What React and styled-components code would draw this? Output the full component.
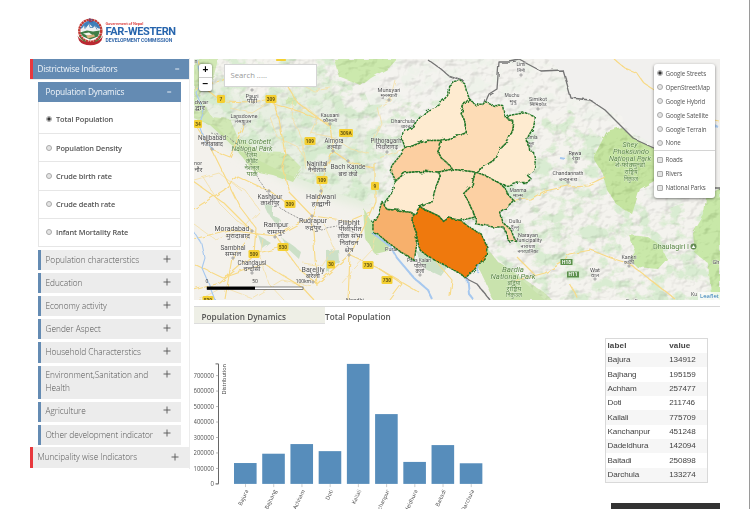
import React from "react";
import styled, { createGlobalStyle } from "styled-components";

const Global = createGlobalStyle`
  * { box-sizing: border-box; }
  html, body { margin: 0; padding: 0; background: #fff; overflow: hidden; }
  body { font-family: "Open Sans", "Noto Sans", sans-serif; color: #555; }
`;

const Page = styled.div`
  width: 750px;
  height: 509px;
  overflow: hidden;
  border-right: 1px solid #9a9a9a;
  display: grid;
  grid-template: 58px 451px / 190px 530px;
`;
const Header = styled.header`
  grid-column: 1 / -1;
  display: flex;
  align-items: flex-start;
  padding: 18px 0 0 75.5px;
`;
const Brand = styled.div`
  display: flex;
  flex-direction: column;
  padding: 4px 0 0 1px;
  white-space: nowrap;
`;
const BrandTop = styled.span`
  font: 700 3.7px/4px "Open Sans", sans-serif;
  letter-spacing: -0.1px;
  color: #dd4545;
`;
const BrandName = styled.span`
  font: 700 11px/11px Roboto, sans-serif;
  letter-spacing: -0.36px;
  color: #2765ad;
`;
const BrandSub = styled.span`
  font: 700 5px/7px Roboto, sans-serif;
  letter-spacing: -0.05px;
  color: #3569aa;
`;

const Sidebar = styled.aside`
  padding: 0.5px 0 0 30px;
  border-right: 1px solid #ececec;
  height: 411px;
`;
const MainItem = styled.div`
  display: flex;
  justify-content: space-between;
  height: 20.5px;
  padding: 0 ${(p) => (p.$open ? 8.5 : 10)}px 0 4.5px;
  border-left: 3px solid #e8383d;
  background: ${(p) => (p.$open ? "#648bb3" : "#ececec")};
  color: ${(p) => (p.$open ? "#f2f6fa" : "#555")};
  font-size: 8.2px;
  line-height: 20.5px;
  font-weight: ${(p) => (p.$open ? 400 : 300)};
  letter-spacing: ${(p) => (p.$open ? -0.18 : 0.04)}px;
  white-space: nowrap;
`;
const SubList = styled.div`
  display: flex;
  flex-direction: column;
  gap: 3px;
  padding: 2.3px 8px 2.5px 7.5px;
  border-top: 1px solid #eee;
`;
const SubHead = styled.div`
  display: flex;
  justify-content: space-between;
  height: 20px;
  padding: 0 8.5px 0 8px;
  background: #648bb3;
  color: #f2f6fa;
  font-size: 8.3px;
  line-height: 20.5px;
  letter-spacing: -0.16px;
`;
const RadioList = styled.div`
  border: solid #e6e6e6;
  border-width: 0 1px 1px;
`;
const RadioRow = styled.label`
  display: flex;
  align-items: center;
  gap: 4px;
  height: ${(p) => (p.$first ? 31 : 28.2)}px;
  padding: ${(p) => (p.$first ? 3 : 0)}px 0 0 7.5px;
  border-top: ${(p) => (p.$first ? 0 : 1)}px solid #e6e6e6;
  font-size: 7.4px;
  font-weight: 600;
  letter-spacing: -0.1px;
`;
const Dot = styled.i`
  flex: none;
  width: 6px;
  height: 6px;
  border: 1px solid #aaa;
  border-radius: ${(p) => (p.$square ? 1 : 4)}px;
  background: ${(p) => (p.$on ? "radial-gradient(#333 0 1.3px, #ddd 2px)" : "#e4e4e4")};
`;
const SubItem = styled.div`
  display: flex;
  justify-content: space-between;
  height: ${(p) => (p.$tall ? 33 : 20.1)}px;
  padding: 3.9px 10.5px 0 5px;
  border-left: 3px solid #648bb3;
  background: #ececec;
  color: #555;
  font-size: 8.3px;
  font-weight: 300;
  line-height: 12.2px;
  letter-spacing: -0.02px;
  white-space: pre-line;
`;
const Sign = styled.svg`
  width: 8px;
  height: 8px;
  flex: none;
  margin-top: ${(p) => p.$top || 0}px;
  stroke: currentColor;
  fill: none;
  stroke-width: 0.9;
`;
const Plus = ({ top }) => <Sign $top={top} viewBox="0 0 8 8"><path d="M.5 4h7M4 .5v7" /></Sign>;
const Minus = ({ top }) => <Sign $top={top} viewBox="0 0 8 8"><path d="M2.2 4h4" /></Sign>;

const Main = styled.main`
  padding: 1px 0 0 4px;
`;
const MapFrame = styled.section`
  position: relative;
  width: 526px;
  height: 241px;
  overflow: hidden;
  background: #f1efea;
`;
const MapDrawing = styled.svg`
  display: block;
  width: 526px;
  height: 241px;
`;
const ZoomBox = styled.div`
  position: absolute;
  left: 5px;
  top: 5px;
  width: 13px;
  height: 27px;
  border-radius: 2px;
  background: #fff;
  box-shadow: 0 0.5px 2px rgba(0, 0, 0, 0.6);
  display: grid;
  grid-template-rows: 1fr 1fr;
`;
const ZoomButton = styled.button`
  border: 0;
  border-bottom: ${(p) => (p.$line ? 1 : 0)}px solid #ccc;
  padding: 0;
  background: none;
  color: #000;
  font: 700 10px/12px "Liberation Sans", sans-serif;
`;
const Search = styled.div`
  position: absolute;
  left: 29.5px;
  top: 5px;
  width: 93px;
  height: 22.5px;
  border: 1px solid #d5d5d5;
  background: #fff;
  padding-left: 6px;
  color: #999;
  font-size: 7.7px;
  line-height: 21.5px;
`;
const Layers = styled.div`
  position: absolute;
  left: 460px;
  top: 5px;
  width: 61px;
  height: 134px;
  padding: 2.5px 0 0 3px;
  border-radius: 3px;
  background: #fff;
  box-shadow: 0 1px 3px rgba(0, 0, 0, 0.5);
`;
const LayerRow = styled.label`
  display: flex;
  align-items: center;
  gap: 2.5px;
  height: 13.9px;
  white-space: nowrap;
  font-size: 6.2px;
  color: #555;
  letter-spacing: -0.12px;
`;
const LayerLine = styled.div`
  height: 1px;
  margin: 0 0 2px -3px;
  background: #d4d4d4;
`;
const Credit = styled.div`
  position: absolute;
  right: 0;
  bottom: 0;
  padding: 0 1px 0 2px;
  background: rgba(255, 255, 255, 0.75);
  color: #2778b5;
  font: 6px/8px "Open Sans", sans-serif;
`;

const Tabs = styled.nav`
  display: flex;
  margin-top: 6px;
  height: 18px;
  border-top: 1px solid #d8d8d8;
  font-size: 8.2px;
  line-height: 19px;
  font-weight: 600;
  letter-spacing: 0.04px;
`;
const Tab = styled.div`
  width: 131px;
  padding-left: ${(p) => (p.$shaded ? 7.5 : 0)}px;
  background: ${(p) => (p.$shaded ? "#eeefe6" : "transparent")};
  border-bottom: ${(p) => (p.$shaded ? 1 : 0)}px solid #ddd;
  white-space: nowrap;
`;
const Results = styled.section`
  display: grid;
  grid-template-columns: 411px 103px;
  height: 179px;
`;
const Chart = styled.svg`
  display: block;
  width: 411px;
  height: 185px;
  font-family: "Open Sans", sans-serif;
`;
const Table = styled.div`
  margin-top: 13.5px;
  height: 145px;
  border: 1px solid #d9d9d9;
  font: 8.1px/14.35px "Liberation Sans", sans-serif;
  color: #444;
`;
const TableRow = styled.div`
  display: grid;
  grid-template-columns: 61.7px 1fr;
  padding-left: 1.5px;
  height: 14.35px;
  padding-top: 0.5px;
  letter-spacing: ${(p) => (p.$head ? 0.12 : -0.1)}px;
  font-weight: ${(p) => (p.$head ? 700 : 400)};
  background: ${(p) => (p.$striped ? "#f6f6f6" : "#fff")};
`;
const Footer = styled.footer`
  margin-left: 417px;
  width: 109px;
  height: 6px;
  background: #333;
`;

const data = [
  ["Bajura", 134912], ["Bajhang", 195159], ["Achham", 257477], ["Doti", 211746], ["Kailali", 775709],
  ["Kanchanpur", 451248], ["Dadeldhura", 142094], ["Baitadi", 250898], ["Darchula", 133274],
];

const districts = [
  ["#feebd0", "265,90 280,78 300,75 313,85 318,105 327,130 310,150 303,175 318,205 318,232 290,243 240,255 200,255 165,268 135,280 125,250 128,232 155,215 180,185 200,165 235,150 262,120"],
  ["#fddcb6", "327,130 345,148 370,150 378,142 400,150 430,153 435,185 458,195 455,220 440,255 420,275 400,315 370,335 345,350 275,342 268,330 240,305 232,290 243,262 240,255 290,243 318,232 318,205 303,175 310,150"],
  ["#fccfa1", "135,280 165,268 200,255 240,255 243,262 232,290 240,305 268,330 275,342 235,350 190,348 135,352 105,378 90,345 95,330 120,300"],
  ["#feebd0", "445,181 458,178 495,172 525,185 520,215 500,250 505,282 520,292 525,325 520,345 502,360 512,370 500,382 470,380 440,390 420,385 380,362 345,350 370,335 400,315 420,275 440,255 455,220 458,195 440,190"],
  ["#feebd0", "105,378 135,352 190,348 235,350 240,362 225,400 215,440 178,455 170,480 150,468 80,462 70,455 75,438 100,405"],
  ["#fde0bf", "235,350 275,342 345,350 335,390 310,415 325,440 345,485 300,495 265,488 250,498 235,482 178,455 215,440 225,400 240,362"],
  ["#fcd0a3", "345,350 380,362 420,385 435,400 445,420 460,435 440,455 418,470 425,500 450,520 465,555 445,557 430,515 400,515 345,505 345,485 325,440 310,415 335,390"],
  ["#f7b06c", "65,438 75,455 80,462 150,468 160,480 158,510 168,535 168,575 162,615 140,600 125,592 95,570 75,555 55,538 38,532 38,500 55,472"],
  ["#ef7908", "178,455 235,482 250,498 265,488 300,495 335,520 362,535 370,550 380,575 378,600 350,635 315,668 300,655 270,638 240,622 205,605 180,585 175,570 168,535 158,510 160,480"],
];

/* label, centre x, baseline y, rendered width, size */
const places = [
  ["n", 196, 63, 3, 5.2], ["Pauri", 252, 98, 13, 5.3], ["पौड़ी", 252, 103, 10, 5], ["dwar", 201.5, 104, 14, 5.6], ["द्वार", 200, 110, 10, 5],
  ["Lansdowne", 244, 117.5, 27, 4.8], ["लैंसडाउन", 243, 123, 17, 4.8],
  ["Najibabad", 212, 140, 28, 6], ["नजीबाबाद", 212, 146, 22, 5.5], ["Kausani", 330, 117, 19, 4.8], ["कौसानी", 330, 122, 14, 4.8],
  ["Almora", 334, 143, 19, 6], ["अल्मोड़ा", 334, 149, 15, 5.2], ["Nainital", 317, 166, 21, 6], ["नैनीताल", 317, 172, 18, 5.6],
  ["Bach Kande", 348, 169, 35, 6], ["बच कंडे", 348, 176, 19, 5.5], ["nor", 198, 165, 8, 5.5], ["नौर", 198.5, 171.5, 8, 5.3],
  ["Kashipur", 270, 199, 25, 5.8], ["काशीपुर", 270, 205, 19, 5.5], ["Haldwani", 321, 199, 30, 6], ["हल्द्वानी", 321, 206, 19, 5.5],
  ["Rudrapur", 313, 223, 28, 5.9], ["रुद्रपुर", 313, 230, 16, 5.4], ["Rampur", 276, 227, 25, 6], ["रामपुर", 276, 234, 18, 5.5],
  ["Moradabad", 232, 231, 35, 6], ["मुरादाबाद", 238, 238, 24, 5.6], ["Sambhal", 233, 249.5, 25, 5.8], ["सम्भल", 233, 256, 16, 5.3],
  ["Chandausi", 252, 264.5, 29, 5.8], ["चन्दौसी", 252, 271, 17, 5.3], ["Bareilly", 313, 272, 23, 6], ["बरेली", 313, 278, 14, 5.4],
  ["Pilibhit", 349, 225, 22, 6], ["पीलीभीत", 350, 231, 23, 5.5], ["लोक सभा", 350, 238, 25, 5.5], ["निर्वाचन", 349, 245, 19, 5.5], ["क्षेत्र", 349, 252, 9, 5.5],
  ["Munsyari", 389, 91.5, 23, 4.9], ["मुनस्यारी", 389, 96.5, 17, 4.8], ["Dharchula", 403, 123, 24, 4.9], ["धारचूला", 408, 128, 14, 4.7],
  ["Pithoragarh", 386, 143, 31, 5.8], ["पिथौरागढ़", 387, 149, 22, 5.3], ["Puranpur", 396, 251, 22, 4.8], ["Palia Kalan", 419, 262, 24, 4.8], ["पलिया", 420, 267.5, 12, 5], ["कलां", 420, 273, 9, 5],
  ["Nandhi", 355, 302, 18, 5.5],
  ["Limi", 521, 66, 9, 4.7], ["लिमी", 521, 71.5, 8, 4.5], ["Muchu", 512, 97, 15, 4.8], ["मुचु", 513, 103, 7, 4.8],
  ["Simikot", 538, 101, 18, 4.7], ["सिमिकोट", 538, 106, 17, 4.8], ["Jumla", 531, 139, 13, 4.8], ["जुम्ला", 530, 145, 9, 4.8],
  ["Rewa", 575, 154.5, 13, 4.8], ["रेवा", 576, 159.5, 8, 4.8], ["Chandannath", 568, 175, 31, 4.9], ["चन्दननाथ", 568, 180.5, 18, 4.7],
  ["Manma", 518, 192, 17, 5], ["मान्म", 518, 197, 10, 4.8], ["Dullu", 515, 223, 12, 5], ["दुल्लु", 515, 229, 8, 4.8],
  ["Narayan", 528, 236.5, 20, 4.8], ["Municipality", 528, 242, 28, 4.8], ["नारायण", 528, 247.5, 15, 4.8], ["नगरपालिका", 528, 252.5, 21, 4.8],
  ["Wat", 595, 272, 10, 4.8], ["वात", 595, 277, 8, 4.8], ["Kankri", 629, 259, 15, 4.8], ["कांक्री", 629, 264, 10, 4.8], ["Gh", 716, 264, 7, 4.8], ["Ku", 694, 296, 6, 4.8], ["Dudhan", 636, 303, 20, 5],
];
const parks = [
  ["Jim Corbett", 253, 143.5, 36, 6.3], ["National Park", 252, 151, 41, 6.3], ["जिम", 252, 157, 10, 5.3], ["कॉर्बेट", 252, 163, 12, 5.3], ["नेशनल", 252, 169.5, 15, 5.3], ["पार्क", 252, 176, 11, 5.3],
  ["Shey", 630, 147, 15, 6.2], ["Phoksundo", 631, 154, 36, 6.2], ["National Park", 630, 161, 42, 6.2], ["शे-फोक्सुन्डो", 630, 167, 30, 5.2], ["राष्ट्रिय", 631, 174, 13, 5.2], ["निकुञ्ज", 631, 181, 14, 5.2],
  ["Bardia", 513, 272, 22, 6.2], ["National Park", 513, 279, 45, 6.2], ["बर्दिया", 514, 285, 13, 5.2], ["राष्ट्रिय", 514, 291, 15, 5.2], ["निकुञ्ज", 514, 297, 16, 5.2],
];
const shields = [
  ["7", 221, 99], ["309", 271, 99], ["34", 198, 124], ["309A", 346, 133], ["109", 310, 141], ["109", 322, 180], ["9", 375, 186],
  ["309", 290, 204], ["530", 283, 247], ["509", 254, 254], ["30", 331, 264.5], ["730", 368, 265], ["730", 387, 280], ["530", 208, 300],
];
const towns = [[252,90],[244,124],[212,149],[330,124],[333,151],[348,161],[321,191],[269,191],[312,216],[275,237],[252,231],[233,258],[252,273],[313,282],[349,255],[389,100],[387,152],[521,75],[538,109],[576,162],[568,182],[520,199],[595,279],[629,266],[420,275],[531,146]];

const majorRoads = [
  "M194 239L228 230L258 234L276 236L313 216L349 221L370 212",
  "M194 290L220 283L254 254L256 228L240 207L212 150L196 126",
  "M276 236L284 248L300 270L317 284L349 255L378 268L420 293",
  "M194 182L225 204L252 231L232 258L225 299",
  "M375 163L375 201L365 225L350 255L348 300",
  "M198 61L207 90L222 101L251 102L272 99L279 119L285 154L282 166L289 192L312 216L317 286",
  "M330 124L333 151L349 162L375 169M333 151L321 179L321 191L312 216",
  "M195 88L223 80L241 67L251 78L285 82L298 103L329 126",
  "M212 150L230 157L244 124M270 102L301 112L330 124",
  "M194 209L224 190L237 176L269 191L289 204M254 254L283 247",
  "M378 268L402 284L390 300M435 260L452 280L450 297",
  "M194 264L223 278L264 264L302 287L313 299",
  "M510 200L530 199L545 191L568 186M510 282L545 273L563 262L569 254L591 250L611 258L630 264L652 281L675 299",
  "M569 283L578 299M517 257L536 276M568 186L588 185L605 177",
  "M615 60L625 68L637 73L644 83L656 91M715 121L720 122",
];
const minorRoads = [
  "M194 224L216 240L244 228L260 211L245 190L230 181M203 177L220 204L236 220L258 234M199 300L223 287L252 298L282 280L312 286",
  "M294 99L292 117L301 137L306 169M230 108L252 113L270 102M292 111L309 109L319 118L312 133M310 133L332 137L351 149L370 154",
  "M270 117L277 137L298 147L307 163L319 179M290 67L278 77L270 86M307 70L302 85L314 91L331 88",
  "M324 224L334 248L322 266L303 263M378 229L373 249L355 268L342 283M194 180L219 173L241 190M263 239L260 257L269 284L284 300",
  "M395 80L390 100L378 108L382 124L372 143M379 158L401 150L410 142",
];

const label = ([t, x, y, w, s], i) => (
  <text key={i} x={x} y={y} fontSize={s * 1.1} textLength={w} lengthAdjust="spacingAndGlyphs">{t}</text>
);

function TerrainMap() {
  return (
    <MapDrawing viewBox="194 59 526 241">
      <defs>
        <filter id="relief" x="0" y="0" width="1" height="1" colorInterpolationFilters="sRGB">
          <feTurbulence type="fractalNoise" baseFrequency="0.075 0.095" numOctaves="3" seed="7" />
          <feDiffuseLighting surfaceScale="4" lightingColor="#fff" diffuseConstant="1.3">
            <feDistantLight azimuth="225" elevation="55" />
          </feDiffuseLighting>
        </filter>
        <filter id="forest" x="0" y="0" width="1" height="1" colorInterpolationFilters="sRGB">
          <feTurbulence type="fractalNoise" baseFrequency="0.06 0.075" numOctaves="4" seed="12" />
          <feColorMatrix values="0 0 0 0 .79  0 0 0 0 .9  0 0 0 0 .75  6 0 0 0 -2.8" />
        </filter>
        <filter id="jagged" x="-.05" y="-.05" width="1.1" height="1.1">
          <feTurbulence type="fractalNoise" baseFrequency=".11" numOctaves="2" seed="4" result="n" />
          <feDisplacementMap in="SourceGraphic" in2="n" scale="4.5" />
        </filter>
        <filter id="soft"><feGaussianBlur stdDeviation="5" /></filter>
        <clipPath id="hills"><path d="M194 59H720V300H545L488 251L370 205L284 173L240 151L216 126L194 118Z" /></clipPath>
      </defs>
      <rect x="194" y="59" width="526" height="241" fill="#f3f1ec" />
      <path filter="url(#soft)" fill="#e4eddd" d="M194 65L255 105L320 78L360 118L382 175L372 210L328 198L284 180L242 156L194 120Z" />
      <g clipPath="url(#hills)">
        <rect x="194" y="59" width="526" height="241" filter="url(#forest)" opacity=".75" />
      </g>
      <path fill="#f3f1ee" opacity=".8" d="M350 59H720V190L650 215L610 145L570 110L530 120L440 100L370 105Z" />
      <path filter="url(#jagged)" fill="#c9e4a8" d="M194 59H218L214 75L207 83L194 103ZM194 100L205 105L212 117L230 119L238 138L260 152L287 153L302 168L293 182L273 175L253 171L236 149L210 125L194 118ZM287 97L298 99L296 106L285 103Z" />
      <path filter="url(#jagged)" fill="#c4e69f" d="M334 59H397L389 68L371 78L361 86L352 82L339 77Z" />
      <path filter="url(#jagged)" fill="#c9e3ad" d="M363 208L378 231L389 240L388 251L375 254L365 238ZM470 250L486 246L497 261L545 293L552 300H493L485 281Z" />
      <path filter="url(#jagged)" fill="#bbe090" d="M607 131L621 127L637 140L656 149V180L640 189L632 214L617 205L607 190L603 174L593 158Z" />
      <path filter="url(#jagged)" fill="#c0e49a" d="M629 235L648 237L661 246L667 259L658 269L637 267L630 260L635 252Z" />
      <path filter="url(#jagged)" fill="#bfe499" d="M720 188L706 197L704 215L693 233L695 253L708 263L711 293L720 300Z" />
      <g clipPath="url(#hills)">
        <rect x="194" y="59" width="526" height="241" filter="url(#relief)" opacity=".15" style={{ mixBlendMode: "multiply" }} />
      </g>
      <path fill="#f1f0ee" d="M548 59H720V187L656 147L650 143L625 127L622 116L605 110L590 100L571 98L568 79Z" />
      <path filter="url(#jagged)" fill="#bcdab8" opacity=".7" d="M264 204L272 205L272 215L281 220L279 227L269 215ZM281 237L291 244L301 252L299 259L286 247ZM326 250L338 249L339 261L326 272ZM416 251L431 253L448 266L441 276L424 268ZM258 235L270 242L262 248Z" />
      <g filter="url(#jagged)" fill="none" strokeLinejoin="round">
        {minorRoads.map((d) => <path key={d} d={d} stroke="#f5dfa4" strokeWidth=".8" />)}
        {majorRoads.map((d) => <path key={d} d={d} stroke="#f8da86" strokeWidth="1.15" />)}
      </g>
      <g filter="url(#jagged)" fill="none" stroke="#a6c8ef">
        <path strokeWidth="2" d="M371 232L390 246L397 258L414 278L428 290L433 300M467 275L469 294L474 300M483 253L477 272" />
        <path strokeWidth="1.1" d="M196 59L201 77L196 93L204 111L199 125L205 142L215 151M194 232L202 244L205 258L202 268L208 282L215 300" />
        <path strokeWidth="2" d="M559 157L565 158M712 124L718 127" />
      </g>
      <g filter="url(#jagged)" fill="none" stroke="#747474" strokeWidth="1.3" strokeLinejoin="round">
        <path d="M427 59L441 69L449 76L464 81M485 103L489 94L497 89L499 62L510 62L520 60L541 71L563 70L571 98L590 100L605 110L622 127L634 139L656 149M714 188H720" />
        <path d="M465 278L477 284L490 300" />
        <path strokeWidth=".7" strokeDasharray="2 1.3" d="M211 133L228 137L244 150L257 176L265 189L281 209L306 222L320 229L337 226L363 236" />
      </g>
      <g fill="#4c4c4c" textAnchor="middle" fontFamily='Roboto, "Noto Sans", "Noto Sans Devanagari", sans-serif' stroke="#fff" strokeWidth=".6" strokeOpacity=".7" paintOrder="stroke">
        {places.map(label)}
        <g fill="#55833f" fontStyle="italic">{parks.map(label)}</g>
        <g fill="#55833f">{label(["Dhaulagiri I", 671, 249, 36, 6.4], 0)}</g>
      </g>
      {towns.map(([x, y]) => <circle key={`${x}-${y}`} cx={x} cy={y} r="1.1" fill="#fff" stroke="#777" strokeWidth=".7" />)}
      <g filter="url(#jagged)">
        <g transform="translate(360.3 55.4) scale(.333333)" stroke="#207527" strokeWidth="4.4" strokeDasharray="8 2" strokeLinejoin="round">
          {districts.map(([fill, points], i) => <polygon key={i} fill={fill} points={points} />)}
        </g>
      </g>
      <circle cx="693.5" cy="246.5" r="3" fill="#648b54" />
      <path d="M691.7 248l1.8-3 1.8 3z" fill="#fff" />
      <g textAnchor="middle" fontFamily="Roboto, sans-serif" fontWeight="700">
        {shields.map(([t, x, y], i) => {
          const w = t.length === 4 ? 14 : t.length === 3 ? 11 : 8;
          return (
            <g key={i}>
              <rect x={x - w / 2} y={y - 4} width={w} height="8" rx="1.3" fill="#f4cf32" />
              <text x={x} y={y + 1.7} fontSize="4.8" fill="#655713">{t}</text>
            </g>
          );
        })}
        <rect x="276" y="59" width="10" height="2" rx=".8" fill="#f4cf32" />
        {[["H18", 566.5, 262], ["H11", 573, 274.5]].map(([t, x, y]) => (
          <g key={t}>
            <rect x={x - 6} y={y - 3} width="12" height="6" fill="#5b8f4a" />
            <text x={x} y={y + 1.7} fontSize="4.8" fill="#fff">{t}</text>
          </g>
        ))}
      </g>
      <rect x="207" y="287" width="96" height="2.5" fill="#fff" stroke="#333" strokeWidth=".6" />
      <rect x="207" y="286.7" width="48" height="3" fill="#000" />
      <g fontFamily="Open Sans, sans-serif" fontSize="5" fill="#333" textAnchor="middle">
        <text x="207" y="283.3">0</text>
        <text x="255" y="283.3">50</text>
        <text x="303.5" y="283.3" textLength="15.5">100km</text>
      </g>
    </MapDrawing>
  );
}

function BarChart() {
  const scale = 120 / 775709;
  return (
    <Chart viewBox="194 324.4 411 185">
      <g stroke="#666" fill="none"><path d="M215.5 364.3H218.5V484.3H215.5" /></g>
      <g fontSize="6.5" fill="#555" textAnchor="end">
        {Array.from({ length: 8 }, (_, i) => {
          const y = 484.3 - i * 100000 * scale;
          return (
            <g key={i}>
              <path d={`M216 ${y}H218.5`} stroke="#888" strokeWidth=".6" />
              <text x="214" y={y + 2.3} textLength={i ? 20.5 : 3.5} lengthAdjust="spacingAndGlyphs">{i * 100000}</text>
            </g>
          );
        })}
      </g>
      <text transform="translate(226.2 364.5) rotate(-90)" fontSize="6" fill="#444" textAnchor="end" textLength="30.5" lengthAdjust="spacingAndGlyphs">Distribution</text>
      {data.map(([name, value], i) => {
        const x = 234 + i * 28.22;
        const h = value * scale;
        return (
          <g key={name}>
            <rect x={x} y={484.3 - h} width="22.6" height={h} fill="#578dbb" />
            <path d={`M${x + 11.5} 484.5v3`} stroke="#aaa" strokeWidth=".6" />
            <text transform={`translate(${x + 14.6} 491.2) rotate(-65)`} fontSize="5.5" fill="#444" textAnchor="end">{name}</text>
          </g>
        );
      })}
    </Chart>
  );
}

function Emblem() {
  return (
    <svg width="29" height="28" viewBox="0 0 29 27">
      <circle cx="14.3" cy="12.3" r="11" fill="#fff" stroke="#c23a33" strokeWidth="2.5" strokeDasharray="2.4 .4" />
      <path d="M4.2 10Q8 2 15 2.2Q22 2.5 24.5 10Z" fill="#3f7fba" />
      <path d="M4.5 12L8 7l2 2 3-4 4 4 2-2 5 5-5 2-8 1z" fill="#eef2f4" />
      <path d="M8 7l1 3 4-5 1 4 3 0 2-2 2 4" fill="none" stroke="#4d83b4" strokeWidth=".8" />
      <path d="M4 14l7-2 6 1 7-1-2 6-8 3-7-3z" fill="#3e7d46" />
      <path d="M7 15l6-1 4 3-4 1z" fill="#f4f5ed" />
      <path d="M13 3.5V0l4 1.5H14l3 2z" fill="#bf2c43" stroke="#315a9c" strokeWidth=".4" />
      <path d="M10 17l8-1 1 2-7 2z" fill="#d8af7a" />
      <path d="M1.5 17Q5 24 14.5 23.5Q24 23.5 27 17L25.5 22Q22 26.7 14.5 26.7Q6 26.7 3 22Z" fill="#b92932" />
      <path d="M3.5 17.5Q6 22 10 23M25 17.5Q22.5 22 19 23" fill="none" stroke="#547c3d" strokeWidth="1.1" />
    </svg>
  );
}

const radios = ["Total Population", "Population Density", "Crude birth rate", "Crude death rate", "Infant Mortality Rate"];
const topics = ["Population characterstics", "Education", "Economy activity", "Gender Aspect", "Household Characterstics", "Environment,Sanitation and\nHealth", "Agriculture", "Other development indicator"];
const bases = ["Google Streets", "OpenStreetMap", "Google Hybrid", "Google Satellite", "Google Terrain", "None"];
const overlays = ["Roads", "Rivers", "National Parks"];

export default function App() {
  return (
    <>
      <Global />
      <Page>
        <Header>
          <Emblem />
          <Brand>
            <BrandTop>Government of Nepal</BrandTop>
            <BrandName>FAR-WESTERN</BrandName>
            <BrandSub>DEVELOPMENT COMMISSION</BrandSub>
          </Brand>
        </Header>
        <Sidebar>
          <MainItem $open>Districtwise Indicators<Minus top={6.5} /></MainItem>
          <SubList>
            <div>
              <SubHead>Population Dynamics<Minus top={6} /></SubHead>
              <RadioList>
                {radios.map((r, i) => (
                  <RadioRow key={r} $first={i === 0}><Dot $on={i === 0} />{r}</RadioRow>
                ))}
              </RadioList>
            </div>
            {topics.map((t) => (
              <SubItem key={t} $tall={t.includes("\n")}>{t}<Plus top={0.8} /></SubItem>
            ))}
          </SubList>
          <MainItem>Muncipality wise Indicators<Plus top={5.5} /></MainItem>
        </Sidebar>
        <Main>
          <MapFrame>
            <TerrainMap />
            <ZoomBox><ZoomButton $line>+</ZoomButton><ZoomButton>−</ZoomButton></ZoomBox>
            <Search>Search .....</Search>
            <Layers>
              {bases.map((b, i) => <LayerRow key={b}><Dot $on={i === 0} />{b}</LayerRow>)}
              <LayerLine />
              {overlays.map((o) => <LayerRow key={o}><Dot $square />{o}</LayerRow>)}
            </Layers>
            <Credit>Leaflet</Credit>
          </MapFrame>
          <Tabs><Tab $shaded>Population Dynamics</Tab><Tab>Total Population</Tab></Tabs>
          <Results>
            <BarChart />
            <Table>
              <TableRow $head><span>label</span><span>value</span></TableRow>
              {data.map(([name, value], i) => (
                <TableRow key={name} $striped={i % 2 === 0}><span>{name}</span><span>{value}</span></TableRow>
              ))}
            </Table>
          </Results>
          <Footer />
        </Main>
      </Page>
    </>
  );
}
